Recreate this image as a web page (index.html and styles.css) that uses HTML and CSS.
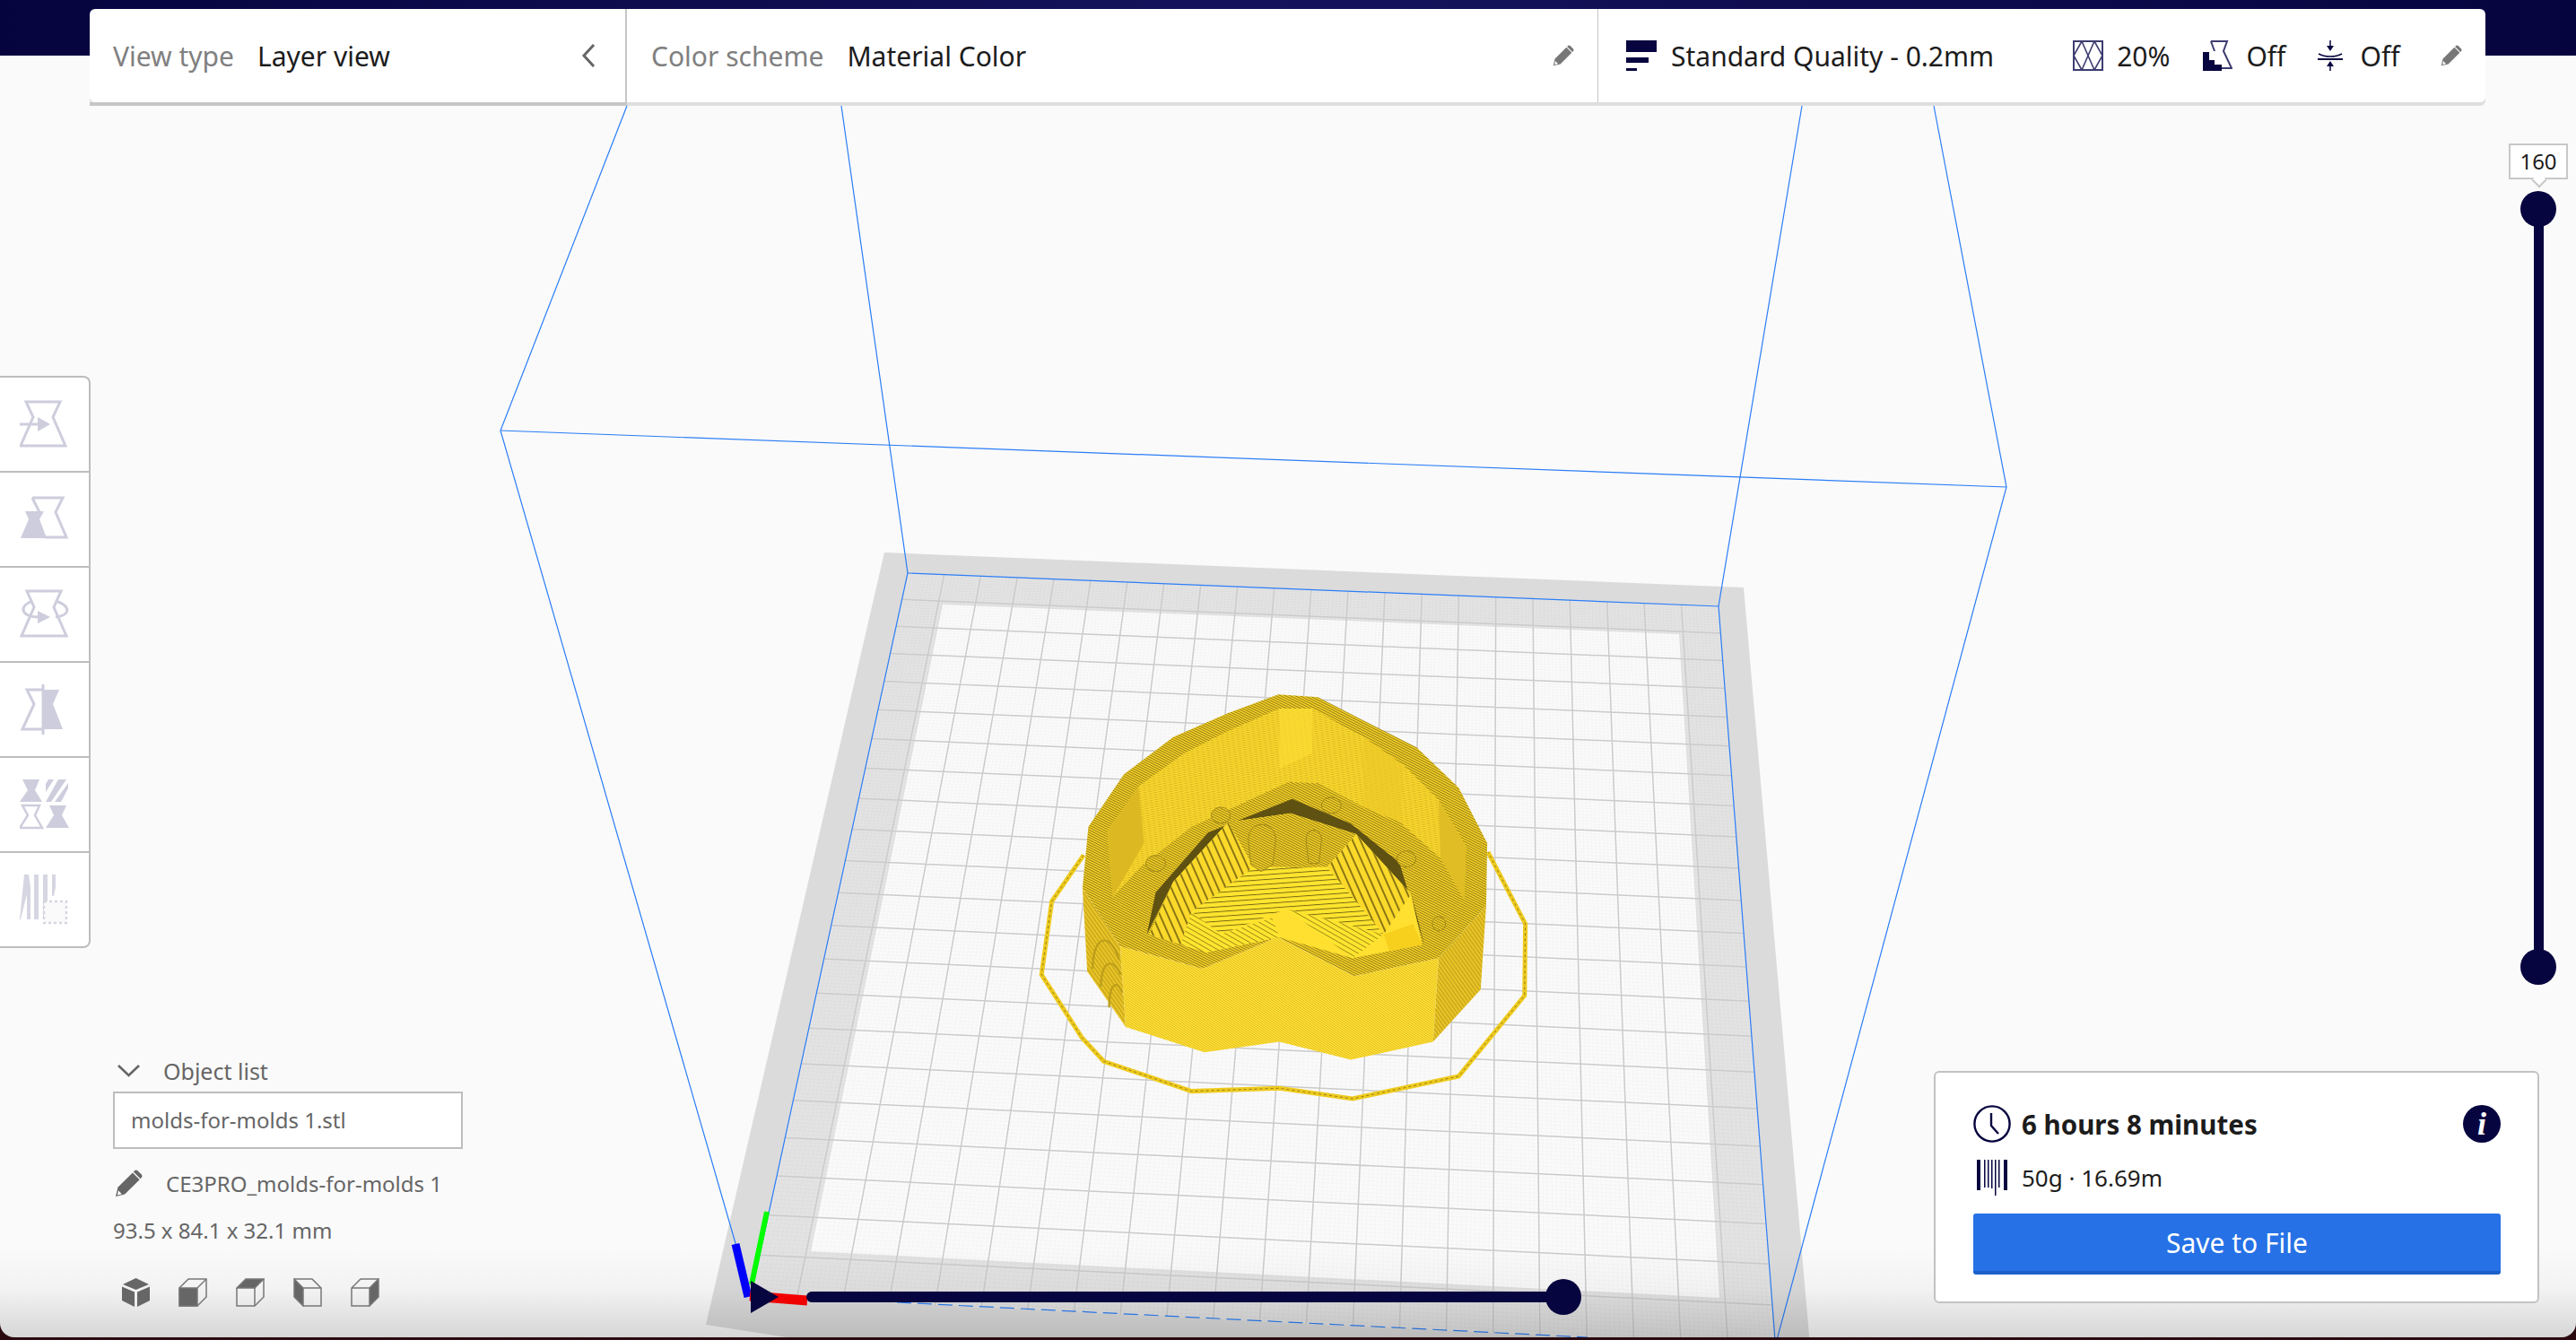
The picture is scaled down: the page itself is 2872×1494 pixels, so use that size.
FILE: index.html
```html
<!DOCTYPE html>
<html lang="en">
<head>
  <meta charset="UTF-8">
  <title>Ultimaker Cura</title>
  <link rel="stylesheet" href="styles.css">
</head>
<body>
  <svg class="defs" width="0" height="0">
    <defs>
      <symbol id="pencil" viewBox="0 0 32 32">
        <path d="M20.5 3.5L28.5 11.5L11.5 28.5L1 31L3.5 20.5Z"/>
        <path d="M22.5 1.5a3 3 0 0 1 4 0l4 4a3 3 0 0 1 0 4l-1 1-8-8Z"/>
        <path d="M4 24L8 28L3 29.5Z" fill="#fff"/>
      </symbol>
      <pattern id="rim" width="7" height="7" patternUnits="userSpaceOnUse" patternTransform="rotate(32)">
        <rect width="7" height="7" fill="#f2ce27"/>
        <rect width="7" height="2.4" fill="#8c7813"/>
      </pattern>
      <pattern id="face" width="6" height="6" patternUnits="userSpaceOnUse" patternTransform="rotate(40)">
        <rect width="6" height="6" fill="#ffe136"/>
        <rect width="6" height="2" fill="#dcb71d"/>
      </pattern>
      <pattern id="wall" width="6" height="6" patternUnits="userSpaceOnUse" patternTransform="rotate(-12)">
        <rect width="6" height="6" fill="#fbd92e"/>
        <rect width="6" height="1.6" fill="#d0ae1c"/>
      </pattern>
      <pattern id="side" width="9" height="9" patternUnits="userSpaceOnUse" patternTransform="rotate(60)">
        <rect width="9" height="9" fill="#e9c525"/>
        <rect width="9" height="3" fill="#c3a11b"/>
      </pattern>
      <pattern id="floor-a" width="16" height="16" patternUnits="userSpaceOnUse" patternTransform="rotate(-5)">
        <rect width="16" height="16" fill="#ffe52e"/>
        <rect width="16" height="3" fill="#7a6a14"/>
      </pattern>
      <pattern id="floor-b" width="20" height="20" patternUnits="userSpaceOnUse" patternTransform="rotate(70)">
        <rect width="20" height="20" fill="#fbd92b"/>
        <rect width="20" height="5" fill="#8a7614"/>
      </pattern>
      <pattern id="floor-c" width="14" height="14" patternUnits="userSpaceOnUse" patternTransform="rotate(35)">
        <rect width="14" height="14" fill="#ffe52e"/>
        <rect width="14" height="2.5" fill="#9a8416"/>
      </pattern>
      <linearGradient id="shade-fade" x1="0" y1="0" x2="0" y2="1">
        <stop offset="0" stop-color="#000" stop-opacity="0"/>
        <stop offset="0.45" stop-color="#000" stop-opacity="0.03"/>
        <stop offset="1" stop-color="#000" stop-opacity="0.15"/>
      </linearGradient>
    </defs>
  </svg>

  <div class="window">
    <svg class="scene" width="2872" height="1494" viewBox="0 0 2872 1494">
      <polygon points="986,616 1944,655 2018,1500 935,1500 787,1477" fill="#dbdbdb"/>
      <polygon points="1012,639 1916,676 1979,1502 837,1445" fill="#e3e3e3"/>
      <polygon points="1051,674 1872,707 1917,1447 904,1395" fill="#fafafa"/>
      <path id="grid-fine" fill="none" stroke="#000" stroke-opacity="0.02"/>
      <path id="grid-major" fill="none" stroke="#cbcbcb" stroke-width="1.5"/>

      <g fill="none" stroke="#2a7df7" stroke-width="1.2">
        <path d="M699 118L558 480L837 1445"/>
        <path d="M938 118L1012 639L837 1445"/>
        <path d="M2009 118L1916 676L1979 1494"/>
        <path d="M2156 118L2237 543L1981 1494"/>
        <path d="M558 480L2237 543"/>
        <path d="M1012 639L1916 676"/>
        <path d="M1000 1452L1770 1491" stroke-dasharray="16 7"/>
      </g>

      <g transform="translate(1100 740) scale(0.408 0.3333)">
        <path d="M265 640L178 795L150 1040L260 1250L320 1330L560 1430L800 1420L1000 1455L1290 1380L1470 1110L1472 870L1370 630" fill="none" stroke="#efcb1f" stroke-width="5" vector-effect="non-scaling-stroke"/>
        <path d="M265 640L178 795L150 1040L260 1250L320 1330L560 1430L800 1420L1000 1455L1290 1380L1470 1110L1472 870L1370 630" fill="none" stroke="#6b5c12" stroke-opacity="0.7" stroke-width="1" stroke-dasharray="3 3" vector-effect="non-scaling-stroke"/>

        <polygon points="262,750 365,945 380,1215 275,1030" fill="url(#side)"/>
        <path d="M290 1020C290 900 340 900 362 990M312 1080C315 980 350 990 366 1040M335 1150C335 1060 360 1060 370 1100" fill="none" stroke="#bd9e1b" stroke-width="6"/>
        <polygon points="1365,810 1235,985 1220,1265 1350,1090" fill="url(#side)"/>
        <polygon points="365,945 590,1020 795,915 1005,1045 1235,985 1220,1265 995,1325 800,1265 595,1300 380,1215" fill="url(#face)"/>

        <polygon points="797,103 905,112 1175,280 1290,415 1368,600 1365,810 1235,985 1005,1045 795,915 590,1020 365,945 262,750 278,545 375,370 510,245 660,165" fill="url(#rim)"/>
        <polygon points="800,150 890,150 1030,245 1140,340 1235,455 1310,610 1305,790 1190,945 1000,1000 800,915 600,965 440,905 345,780 330,560 415,410 540,300 660,225" fill="url(#wall)"/>
        <polygon points="1235,455 1310,610 1305,790 1240,650" fill="#e0bd24"/>
        <polygon points="415,410 330,560 345,780 430,600" fill="#dcb922"/>
        <polygon points="800,150 890,150 890,300 800,350" fill="#ffe035" fill-opacity="0.55"/>
        <polygon points="1030,245 1140,340 1130,530 1030,480" fill="#ecc827" fill-opacity="0.6"/>
        <polygon points="345,780 420,680 560,545 825,395 905,400 1030,480 1130,530 1240,650 1305,790 1190,945 1000,1000 800,915 600,965 440,905" fill="url(#rim)"/>

        <polygon points="438,905 462,765 605,565 835,452 995,535 1128,665 1197,945 1160,770 1010,570 830,500 660,530 510,730" fill="#5f5112"/>
        <polygon points="445,905 510,730 660,530 830,500 1010,570 1160,770 1190,940 1000,985 800,915 600,965" fill="#ffe030"/>
        <polygon points="510,730 660,530 730,680 560,830 530,940 445,905" fill="url(#floor-b)"/>
        <polygon points="930,680 1010,570 1160,770 1085,905" fill="url(#floor-b)"/>
        <polygon points="660,530 830,500 1010,570 930,680 730,680" fill="url(#rim)"/>
        <polygon points="730,680 930,680 1085,905 820,820 640,905 560,830" fill="url(#floor-a)"/>
        <polygon points="820,820 1085,905 1000,985" fill="url(#floor-c)"/>
        <polygon points="560,830 640,905 780,850 800,915 600,965 530,940" fill="url(#floor-c)"/>
        <polygon points="1085,905 1165,870 1190,940 1100,960" fill="#f7cf1d"/>

        <g fill="url(#rim)" stroke="#a58a18" stroke-width="1">
          <path d="M715 590C715 520 790 520 790 590L782 672L750 695L722 672Z" vector-effect="non-scaling-stroke"/>
          <path d="M873 590C873 545 915 545 915 590L908 668H880Z" vector-effect="non-scaling-stroke"/>
          <ellipse cx="640" cy="507" rx="26" ry="27" vector-effect="non-scaling-stroke"/>
          <ellipse cx="942" cy="474" rx="27" ry="27" vector-effect="non-scaling-stroke"/>
          <ellipse cx="1147" cy="653" rx="26" ry="27" vector-effect="non-scaling-stroke"/>
          <ellipse cx="462" cy="668" rx="27" ry="27" vector-effect="non-scaling-stroke"/>
          <ellipse cx="1236" cy="870" rx="18" ry="24" vector-effect="non-scaling-stroke"/>
        </g>
      </g>

      <line x1="855" y1="1351" x2="838" y2="1432" stroke="#00ff00" stroke-width="6"/>
      <line x1="820" y1="1387" x2="834" y2="1446" stroke="#0000ff" stroke-width="9"/>
      <line x1="836" y1="1445" x2="900" y2="1450" stroke="#ff0000" stroke-width="11"/>
      <rect x="0" y="1390" width="2872" height="104" fill="url(#shade-fade)"/>
    </svg>

    <header class="band">
      <div class="topbar">
        <div class="bar-section bar-view">
          <span class="bar-label">View type</span>
          <span class="bar-value">Layer view</span>
          <svg class="chevron" width="16" height="26" viewBox="0 0 16 26"><path d="M14 1L3 13L14 25" fill="none" stroke="#666" stroke-width="3"/></svg>
        </div>
        <div class="bar-section bar-scheme">
          <span class="bar-label">Color scheme</span>
          <span class="bar-value">Material Color</span>
          <svg class="bar-pencil" width="24" height="24"><use href="#pencil"/></svg>
        </div>
        <div class="bar-section bar-profile">
          <svg class="icon-profile" width="34" height="34" viewBox="0 0 34 34" fill="#07053f">
            <rect width="34" height="13"/><rect y="19" width="25" height="6"/><rect y="31" width="12" height="3"/>
          </svg>
          <span class="bar-value profile-name">Standard Quality - 0.2mm</span>
          <svg class="icon-infill" width="34" height="34" viewBox="0 0 34 34" fill="none" stroke="#3d3c70" stroke-width="1.6">
            <rect x="1" y="1" width="32" height="32" stroke-width="2"/>
            <path d="M10 1L1 17L10 33L17 17ZM10 1L17 17L24 33L33 17L24 1L17 17L10 33"/>
          </svg>
          <span class="bar-value">20%</span>
          <svg class="icon-support" width="33" height="34" viewBox="0 0 33 34">
            <path d="M9 1H27L23 12L32 31H14" fill="none" stroke="#3d3c70" stroke-width="2"/>
            <path d="M9 1L13 12" stroke="#3d3c70" stroke-width="2"/>
            <path d="M0 13H7V22H13V27H21V34H0Z" fill="#07053f"/>
          </svg>
          <span class="bar-value">Off</span>
          <svg class="icon-adhesion" width="28" height="34" viewBox="0 0 28 34" fill="#07053f">
            <path d="M14 0V7" stroke="#07053f" stroke-width="1.5"/><path d="M10 6H18L14 12Z"/>
            <path d="M1 15C8 19 20 19 27 15" fill="none" stroke="#07053f" stroke-width="1.6"/>
            <rect y="20" width="28" height="2"/>
            <path d="M10 29H18L14 23Z"/><path d="M14 28V34" stroke="#07053f" stroke-width="1.5"/>
          </svg>
          <span class="bar-value">Off</span>
          <svg class="bar-pencil" width="24" height="24"><use href="#pencil"/></svg>
        </div>
      </div>
    </header>

    <main class="workspace">
      <aside class="left-col">
        <nav class="toolbar">
          <button class="tool">
            <svg width="56" height="56" viewBox="0 0 56 56" fill="none" stroke="#cdcddd" stroke-width="3">
              <path d="M7 3H45L37 20L51 52H1L15 20Z"/>
              <path d="M0 28H20"/><path d="M20 20L34 28L20 36Z" fill="#cdcddd" stroke="none"/>
            </svg>
          </button>
          <button class="tool">
            <svg width="56" height="56" viewBox="0 0 56 56" fill="none" stroke="#cdcddd" stroke-width="3">
              <path d="M14 4H48L40 20L52 48H28M14 4L22 20"/>
              <path d="M6 19H27L22 28L30 49H1L10 28Z" fill="#cdcddd" stroke="none"/>
            </svg>
          </button>
          <button class="tool">
            <svg width="56" height="56" viewBox="0 0 56 56" fill="none" stroke="#cdcddd" stroke-width="3">
              <path d="M8 2H46L38 20L52 52H2L16 20Z"/>
              <path d="M14 13C-2 20 2 30 20 31M40 13C58 19 56 29 40 31"/>
              <path d="M20 24L34 31L20 38Z" fill="#cdcddd" stroke="none"/>
            </svg>
          </button>
          <button class="tool">
            <svg width="56" height="56" viewBox="0 0 56 56" fill="none" stroke="#cdcddd" stroke-width="3">
              <path d="M26 6H8L16 22L3 50H26"/>
              <path d="M26 6H44L37 22L48 50H26Z" fill="#cdcddd" stroke="none"/>
              <path d="M26 0V56"/>
            </svg>
          </button>
          <button class="tool">
            <svg width="56" height="56" viewBox="0 0 56 56" fill="#cdcddd">
              <path d="M3 0H22L17 12L25 25H0L9 12Z"/>
              <path d="M29 25L43 0H52L35 25ZM39 25L54 4V10L46 25ZM29 14L38 0H32L29 5Z"/>
              <path d="M3 29H22L17 40L25 54H0L9 40Z" fill="none" stroke="#cdcddd" stroke-width="2.5"/>
              <path d="M33 29H52L47 40L55 54H29L38 40Z"/>
            </svg>
          </button>
          <button class="tool">
            <svg width="56" height="56" viewBox="0 0 56 56" fill="#d6d6e3">
              <path d="M5 0H10L12 14V50H8V22L1 50H0ZM16 0H21V50H16ZM26 0H31V50H26Z"/>
              <path d="M36 0H40V14L38 24H36Z"/>
              <rect x="27" y="30" width="25" height="24" fill="#fafafa" stroke="#d6d6e3" stroke-width="2.5" stroke-dasharray="3 3"/>
            </svg>
          </button>
        </nav>

        <section class="object-list">
          <div class="object-head">
            <svg width="25" height="14" viewBox="0 0 25 14"><path d="M1 1L12.5 12L24 1" fill="none" stroke="#666" stroke-width="2.6"/></svg>
            <span>Object list</span>
          </div>
          <div class="object-name">molds-for-molds 1.stl</div>
          <div class="object-job">
            <svg width="31" height="31" fill="#666"><use href="#pencil"/></svg>
            <span>CE3PRO_molds-for-molds 1</span>
          </div>
          <div class="object-size">93.5 x 84.1 x 32.1 mm</div>
          <div class="view-icons">
            <svg width="31" height="32" viewBox="0 0 31 32" fill="#666">
              <path d="M15.5 0L30 7L15.5 13L1 7Z"/><path d="M0 9.5L14 15.5V32L0 25Z"/><path d="M31 9.5L17 15.5V32L31 25Z"/>
            </svg>
            <svg width="32" height="32" viewBox="0 0 32 32" fill="none" stroke="#777" stroke-width="1.5">
              <path d="M1 11L11 1H31V21L21 31H1Z"/><path d="M21 11L31 1"/><rect x="1" y="11" width="20" height="20" fill="#666"/>
            </svg>
            <svg width="32" height="32" viewBox="0 0 32 32" fill="none" stroke="#777" stroke-width="1.5">
              <path d="M1 11L11 1H31L21 11Z" fill="#666"/><path d="M31 1V21L21 31H1V11"/><path d="M21 11V31"/>
            </svg>
            <svg width="32" height="32" viewBox="0 0 32 32" fill="none" stroke="#777" stroke-width="1.5">
              <path d="M1 1L11 11V31L1 21Z" fill="#666"/><path d="M1 1H21L31 11V31H11M11 11H31"/>
            </svg>
            <svg width="32" height="32" viewBox="0 0 32 32" fill="none" stroke="#777" stroke-width="1.5">
              <path d="M21 11L31 1V21L21 31Z" fill="#666"/><path d="M31 1H11L1 11V31H21M1 11H21"/>
            </svg>
          </div>
        </section>
      </aside>

      <aside class="right-col">
        <section class="summary">
          <div class="summary-row time-row">
            <svg class="summary-icon" width="42" height="42" viewBox="0 0 42 42" fill="none" stroke="#07053f" stroke-width="2.4">
              <circle cx="21" cy="21" r="19.6"/><path d="M20 9V23L28 32"/>
            </svg>
            <strong>6 hours 8 minutes</strong>
            <span class="info-dot">i</span>
          </div>
          <div class="summary-row cost-row">
            <svg class="summary-icon" width="42" height="40" viewBox="0 0 42 40" fill="#07053f">
              <rect x="4" width="4" height="34"/><rect x="12" width="1.5" height="31"/><rect x="16" width="1.5" height="31"/>
              <rect x="20" width="1.5" height="32"/><rect x="24" width="1.5" height="40"/><rect x="28" width="1.5" height="31"/><rect x="34" width="4" height="34"/>
            </svg>
            <span>50g · 16.69m</span>
          </div>
          <button class="save-button">Save to File</button>
        </section>
      </aside>
    </main>
    <div class="layer-slider">
      <div class="layer-label">160</div>
      <div class="layer-track"><i class="knob knob-top"></i><i class="knob knob-bottom"></i></div>
    </div>
    <div class="path-slider">
      <i class="path-play"></i>
      <div class="path-track"><i class="knob knob-end"></i></div>
    </div>
  </div>
  <script src="scene.js"></script>
</body>
</html>
```

FILE: styles.css
```css
* {
  box-sizing: border-box;
}

html {
  background: #2a0a10;
}

body {
  margin: 0;
  height: 1494px;
  font-family: "Noto Sans", "Open Sans", sans-serif;
  color: #1c1c1c;
}

.defs {
  position: absolute;
}

.window {
  position: relative;
  height: 1491px;
  background: #fafafa;
  border-radius: 0 0 16px 16px;
  overflow: hidden;
  display: flex;
  flex-direction: column;
}

.scene {
  position: absolute;
  left: 0;
  top: 0;
}

/* top bar */
.band {
  position: relative;
  height: 62px;
  padding: 10px 101px 0 100px;
  background: linear-gradient(90deg, #06043e, #15135c 50%, #06043e);
}

.topbar {
  display: flex;
  height: 104px;
  background: #fff;
  border-radius: 6px;
  box-shadow: 0 4px 0 #dedede;
}

.bar-section {
  display: flex;
  align-items: center;
  font-size: 30px;
  padding-left: 26px;
}

.bar-view {
  width: 599px;
  flex: none;
  border-right: 2px solid #c6c6c6;
  box-shadow: 0 4px 0 #c6c6c6;
}

.bar-scheme {
  width: 1083px;
  flex: none;
  border-right: 1px solid #c6c6c6;
  padding-left: 27px;
}

.bar-profile {
  flex: 1;
  padding-left: 31px;
}

.bar-label {
  color: #808080;
  margin-right: 26px;
}

.bar-value {
  color: #1c1c1c;
}

.chevron {
  margin-left: auto;
  margin-right: 33px;
}

.bar-pencil {
  fill: #777;
  margin-left: auto;
  margin-right: 26px;
}

.profile-name {
  margin-left: 16px;
  margin-right: 88px;
}

.icon-infill,
.icon-support,
.icon-adhesion {
  margin-right: 15px;
}

.icon-support {
  margin-left: 37px;
}

.icon-adhesion {
  margin-left: 36px;
  margin-right: 19px;
}

/* main columns */
.workspace {
  position: relative;
  flex: 1;
  display: flex;
  justify-content: space-between;
}

.left-col {
  width: 530px;
  padding-top: 357px;
}

.toolbar {
  width: 101px;
  height: 638px;
  display: flex;
  flex-direction: column;
  background: #fff;
  border: 2px solid #bdbdbd;
  border-left: 0;
  border-radius: 0 8px 8px 0;
}

.tool {
  flex: 1;
  display: flex;
  align-items: center;
  justify-content: center;
  padding: 0;
  background: none;
  border: 0;
  border-bottom: 2px solid #bdbdbd;
}

.tool:last-child {
  border-bottom: 0;
}

.object-list {
  margin: 126px 0 0 126px;
  width: 390px;
  font-size: 24px;
  color: #666;
}

.object-head {
  display: flex;
  align-items: center;
  gap: 26px;
  height: 34px;
  padding: 0 0 12px 5px;
}

.object-head span {
  font-size: 25px;
}

.object-name {
  height: 64px;
  padding-left: 18px;
  line-height: 60px;
  background: #fff;
  border: 2px solid #bdbdbd;
}

.object-job {
  display: flex;
  align-items: center;
  gap: 26px;
  height: 32px;
  margin-top: 22px;
  padding-left: 2px;
}

.object-size {
  margin-top: 20px;
  line-height: 34px;
}

.view-icons {
  display: flex;
  gap: 32px;
  margin-top: 36px;
  padding-left: 10px;
}

.right-col {
  width: 716px;
  display: flex;
  flex-direction: column;
  justify-content: flex-end;
  padding: 0 41px 38px 0;
}

.summary {
  height: 259px;
  padding: 36px 41px 0 42px;
  background: #fff;
  border: 2px solid #c2c2c2;
  border-radius: 6px;
}

.summary-row {
  display: flex;
  align-items: center;
  gap: 12px;
}

.time-row {
  height: 42px;
  font-size: 29.5px;
}

.time-row strong {
  font-weight: 700;
}

.info-dot {
  margin-left: auto;
  width: 42px;
  height: 42px;
  border-radius: 50%;
  background: #07053f;
  color: #fff;
  font: italic 700 36px/42px "Liberation Serif", serif;
  text-align: center;
}

.cost-row {
  height: 40px;
  margin-top: 19px;
  font-size: 26px;
}

.save-button {
  display: block;
  width: 100%;
  height: 68px;
  margin-top: 20px;
  background: #2671e6;
  border: 0;
  border-bottom: 4px solid #1c60ca;
  border-radius: 3px;
  color: #fff;
  font: 30px "Noto Sans", sans-serif;
}

/* sliders lying over the build plate */
.layer-slider {
  position: absolute;
  left: 2797px;
  top: 160px;
  width: 66px;
}

.layer-label {
  position: relative;
  height: 40px;
  background: #fff;
  border: 2px solid #c8c8c8;
  font-size: 24px;
  line-height: 36px;
  text-align: center;
}

.layer-label::after {
  content: "";
  position: absolute;
  left: 26px;
  bottom: -9px;
  width: 10px;
  height: 10px;
  background: #fff;
  border-right: 2px solid #c8c8c8;
  border-bottom: 2px solid #c8c8c8;
  transform: rotate(45deg);
}

.layer-track {
  position: relative;
  left: 28px;
  top: 33px;
  width: 11px;
  height: 845px;
  background: #07053f;
}

.knob {
  position: absolute;
  width: 40px;
  height: 40px;
  background: #07053f;
  border-radius: 50%;
}

.knob-top {
  left: -15px;
  top: -20px;
}

.knob-bottom {
  left: -15px;
  bottom: -20px;
}

.path-slider {
  position: absolute;
  left: 837px;
  top: 1428px;
  width: 906px;
  height: 35px;
}

.path-play {
  position: absolute;
  left: 0;
  top: 0;
  border-left: 31px solid #07053f;
  border-top: 18px solid transparent;
  border-bottom: 18px solid transparent;
}

.path-track {
  position: absolute;
  left: 62px;
  top: 12px;
  right: 0;
  height: 12px;
  background: #07053f;
  border-radius: 6px 0 0 6px;
}

.knob-end {
  right: -20px;
  top: -14px;
}
```

FILE: scene.js
```js
// perspective grid on the build plate (22 x 22 cells, 10 fine lines per cell)
var q = [[1012, 639], [1916, 676], [1979, 1502], [837, 1445]];

var sx = q[0][0] - q[1][0] + q[2][0] - q[3][0];
var sy = q[0][1] - q[1][1] + q[2][1] - q[3][1];
var dx1 = q[1][0] - q[2][0], dx2 = q[3][0] - q[2][0];
var dy1 = q[1][1] - q[2][1], dy2 = q[3][1] - q[2][1];
var den = dx1 * dy2 - dx2 * dy1;
var g = (sx * dy2 - dx2 * sy) / den;
var h = (dx1 * sy - sx * dy1) / den;

function project(u, v) {
  var w = g * u + h * v + 1;
  var x = (q[1][0] - q[0][0] + g * q[1][0]) * u + (q[3][0] - q[0][0] + h * q[3][0]) * v + q[0][0];
  var y = (q[1][1] - q[0][1] + g * q[1][1]) * u + (q[3][1] - q[0][1] + h * q[3][1]) * v + q[0][1];
  return (x / w).toFixed(1) + " " + (y / w).toFixed(1);
}

function gridPath(n) {
  var d = "";
  for (var i = 1; i < n; i++) {
    d += "M" + project(i / n, 0) + "L" + project(i / n, 1);
    d += "M" + project(0, i / n) + "L" + project(1, i / n);
  }
  return d;
}

document.getElementById("grid-major").setAttribute("d", gridPath(22));
document.getElementById("grid-fine").setAttribute("d", gridPath(220));
```
